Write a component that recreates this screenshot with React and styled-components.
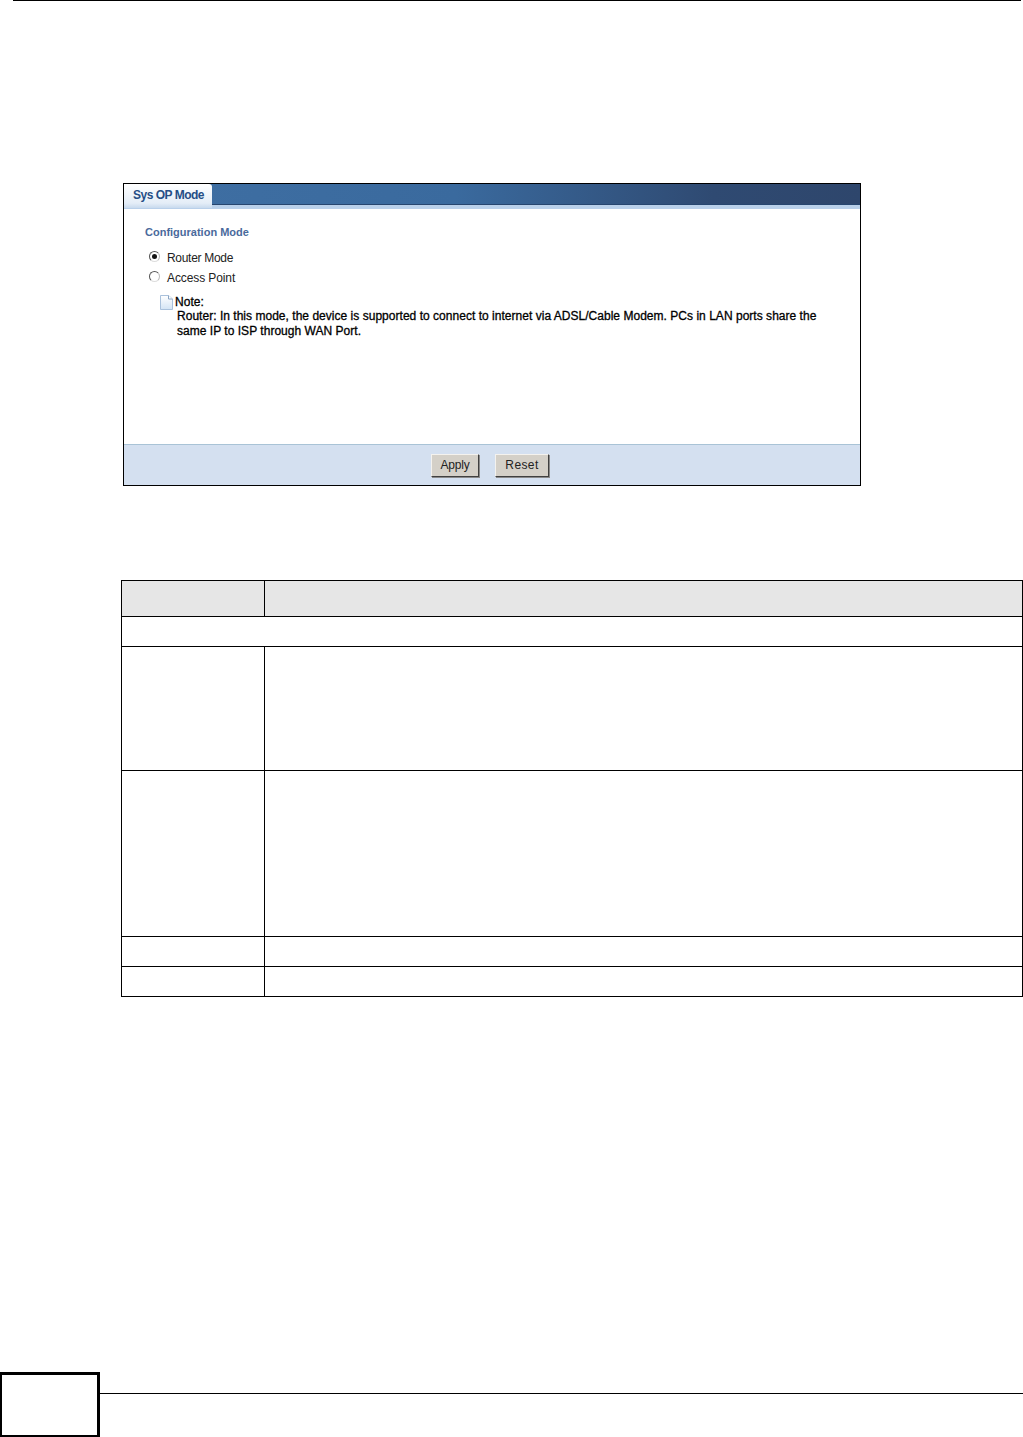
import React from "react";
import styled, { createGlobalStyle } from "styled-components";

const GlobalStyle = createGlobalStyle`
  html, body {
    margin: 0;
    padding: 0;
    background: #fff;
    overflow: hidden;
  }
`;

const Page = styled.div`
  width: 1023px;
  height: 1437px;
  display: flex;
  flex-direction: column;
  font-family: "Liberation Sans", Arial, sans-serif;
  color: #000;
`;

const TopRule = styled.div`
  height: 1px;
  margin: 0 2px 0 13px;
  background: #000;
`;

const Shot = styled.div`
  width: 738px;
  height: 303px;
  box-sizing: border-box;
  margin: 182px 0 0 123px;
  border: 1px solid #000;
  display: flex;
  flex-direction: column;
`;

const TabBar = styled.div`
  height: 21px;
  flex: none;
  display: flex;
  background: linear-gradient(90deg, #3f6fa3 0%, #3a6a9e 45%, #2f4a72 80%, #2e466c 100%);
  border-bottom: 4px solid #b9d0ea;
  box-shadow: inset 0 -1px 0 #27466f;
`;

const Tab = styled.div`
  width: 88px;
  height: 24px;
  box-sizing: border-box;
  padding: 4px 0 0 9px;
  border-radius: 0 3px 0 0;
  background: linear-gradient(180deg, #ffffff 0%, #e4edf7 80%, #c8daee 100%);
  font-size: 12px;
  line-height: 14px;
  font-weight: 700;
  letter-spacing: -0.5px;
  color: #254e86;
`;

const Body = styled.div`
  flex: 1;
  padding: 17px 0 0 21px;
`;

const Heading = styled.div`
  margin-bottom: 9px;
  font-size: 11px;
  line-height: 13px;
  font-weight: 700;
  color: #4a6a9c;
`;

const RadioRow = styled.div`
  display: flex;
  align-items: center;
  height: 20px;
  margin-left: 4px;
  font-size: 12px;
  letter-spacing: ${p => p.$spacing}px;
  color: #222;
`;

const Radio = styled.span`
  width: 11px;
  height: 11px;
  box-sizing: border-box;
  margin: -4px 7px 0 0;
  border-radius: 50%;
  border: 1px solid #555;
  border-right-color: #bbb;
  border-bottom-color: #ddd;
  display: flex;
  align-items: center;
  justify-content: center;
  &::after {
    content: "";
    width: 5px;
    height: 5px;
    border-radius: 50%;
    background: ${p => (p.$checked ? "#111" : "transparent")};
  }
`;

const NoteBlock = styled.div`
  display: flex;
  margin: 6.75px 0 0 15px;
`;

const NoteIcon = styled.svg`
  flex: none;
  width: 13px;
  height: 15px;
  margin: 0.25px 2px 0 0;
`;

const NoteText = styled.div`
  font-size: 12px;
  line-height: 14.5px;
  letter-spacing: 0.026px;
  -webkit-text-stroke: 0.3px #000;
`;

const NoteBody = styled.div`
  margin-left: 2px;
  width: 650px;
`;

const ButtonBar = styled.div`
  height: 41px;
  flex: none;
  box-sizing: border-box;
  background: #d4e0f0;
  border-top: 1px solid #a9c3d6;
  display: flex;
  justify-content: center;
  gap: 16px;
  padding: 9px 4px 0 0;
`;

const Button = styled.div`
  height: 23px;
  width: ${p => p.$width}px;
  box-sizing: border-box;
  background: #d4d0c8;
  border: 1px solid;
  border-color: #f4f2ee #404040 #404040 #f4f2ee;
  box-shadow: 1px 1px 0 #8a8a8a;
  font-size: 12px;
  line-height: 20px;
  letter-spacing: ${p => p.$spacing}px;
  text-align: center;
  color: #222;
`;

const Table = styled.div`
  margin: 94px 0 0 121px;
  width: 902px;
  box-sizing: border-box;
  border-top: 1px solid #000;
  border-left: 1px solid #000;
  display: grid;
  grid-template-columns: 143px 1fr;
`;

const Cell = styled.div`
  box-sizing: border-box;
  height: ${p => p.$height}px;
  grid-column: ${p => (p.$wide ? "1 / -1" : "auto")};
  background: ${p => (p.$head ? "#e6e6e6" : "#fff")};
  border-right: 1px solid #000;
  border-bottom: 1px solid #000;
`;

const Footer = styled.div`
  margin-top: auto;
  display: flex;
  height: 65px;
`;

const PageBox = styled.div`
  width: 100px;
  box-sizing: border-box;
  border: 3px solid #000;
  border-left-width: 2px;
  border-bottom-width: 2px;
`;

const FooterRule = styled.div`
  flex: 1;
  height: 1px;
  margin-top: 21px;
  background: #000;
`;

const rows = [
  { height: 36, head: true },
  { height: 30, wide: true },
  { height: 124 },
  { height: 166 },
  { height: 30 },
  { height: 30 },
];

const App = () => (
  <Page>
    <GlobalStyle />
    <TopRule />
    <Shot>
      <TabBar>
        <Tab>Sys OP Mode</Tab>
      </TabBar>
      <Body>
        <Heading>Configuration Mode</Heading>
        <RadioRow $spacing={-0.3}>
          <Radio $checked />
          Router Mode
        </RadioRow>
        <RadioRow $spacing={-0.1}>
          <Radio />
          Access Point
        </RadioRow>
        <NoteBlock>
          <NoteIcon viewBox="0 0 13 15">
            <defs>
              <linearGradient id="noteFill" x1="0" y1="0" x2="0" y2="1">
                <stop offset="0" stopColor="#ffffff" />
                <stop offset="1" stopColor="#d3e4f5" />
              </linearGradient>
            </defs>
            <path d="M0.5 0.5H8.5L12.5 4V14.5H0.5Z" fill="url(#noteFill)" stroke="#a9c1dc" />
            <path d="M8.5 0.5V4H12.5" fill="#fff" stroke="#8aa4c2" />
          </NoteIcon>
          <NoteText>
            Note:
            <NoteBody>
              Router: In this mode, the device is supported to connect to internet via ADSL/Cable Modem. PCs in LAN ports share the same IP to ISP through WAN Port.
            </NoteBody>
          </NoteText>
        </NoteBlock>
      </Body>
      <ButtonBar>
        <Button $width={48} $spacing={-0.2}>Apply</Button>
        <Button $width={54} $spacing={0.4}>Reset</Button>
      </ButtonBar>
    </Shot>
    <Table>
      {rows.map((row, i) =>
        row.wide ? (
          <Cell key={i} $wide $height={row.height} />
        ) : (
          <React.Fragment key={i}>
            <Cell $head={row.head} $height={row.height} />
            <Cell $head={row.head} $height={row.height} />
          </React.Fragment>
        )
      )}
    </Table>
    <Footer>
      <PageBox />
      <FooterRule />
    </Footer>
  </Page>
);

export default App;
